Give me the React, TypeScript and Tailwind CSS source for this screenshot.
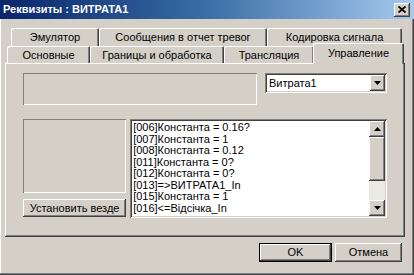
import React from 'react';

// Classic Win2000-style 3D edges
const raised =
  'shadow-[inset_-1px_-1px_0_#404040,inset_1px_1px_0_#ffffff,inset_-2px_-2px_0_#808080,inset_2px_2px_0_#d4d0c8]';
const sunken =
  'shadow-[inset_1px_1px_0_#808080,inset_-1px_-1px_0_#ffffff,inset_2px_2px_0_#404040,inset_-2px_-2px_0_#d4d0c8]';
const staticEdge = 'shadow-[inset_1px_1px_0_#808080,inset_-1px_-1px_0_#ffffff]';
const tabEdge =
  'shadow-[inset_1px_1px_0_#ffffff,inset_-1px_0_0_#404040,inset_-2px_0_0_#808080]';

const listItems = [
  '[006]Константа = 0.16?',
  '[007]Константа = 1',
  '[008]Константа = 0.12',
  '[011]Константа = 0?',
  '[012]Константа = 0?',
  '[013]=>ВИТРАТА1_In',
  '[015]Константа = 1',
  '[016]<=Відсічка_In',
];

const Arrow: React.FC<{ up?: boolean }> = ({ up }) => (
  <svg width="7" height="4" viewBox="0 0 7 4">
    {up ? <path d="M3.5 0 L7 4 L0 4 Z" fill="#000" /> : <path d="M0 0 L7 0 L3.5 4 Z" fill="#000" />}
  </svg>
);

const Tab: React.FC<{ label: string; width: string }> = ({ label, width }) => (
  <div className={`${width} h-full flex items-center justify-center rounded-t-[2px] ${tabEdge}`}>
    <span className="pt-[1px]">{label}</span>
  </div>
);

export default function App() {
  return (
    <div
      className="w-[414px] h-[275px] bg-[#d4d0c8] text-black text-[11px] leading-none flex flex-col overflow-hidden shadow-[inset_-1px_-1px_0_#404040,inset_-2px_-2px_0_#808080,inset_1px_1px_0_#ffffff]"
      style={{ fontFamily: '"Liberation Sans", Arial, sans-serif' }}
    >
      {/* Title bar */}
      <div className="h-[19px] flex items-center justify-between pl-[3px] pr-[4px] bg-gradient-to-r from-[#0a246a] via-[#3a6ea5] to-[#a6caf0]">
        <span className="text-white font-bold text-[11px]">Реквизиты : ВИТРАТА1</span>
        <div className={`w-[16px] h-[14px] bg-[#d4d0c8] flex items-center justify-center ${raised}`}>
          <svg width="8" height="7" viewBox="0 0 8 7">
            <path d="M0.5 0.5 L7.5 6.5 M7.5 0.5 L0.5 6.5" stroke="#000" strokeWidth="1.8" />
          </svg>
        </div>
      </div>

      {/* Tabs */}
      <div className="pl-[5px] pt-[9px]">
        <div className="ml-[6px] flex h-[18px]">
          <Tab label="Эмулятор" width="w-[88px]" />
          <Tab label="Сообщения в отчет тревог" width="w-[168px]" />
          <Tab label="Кодировка сигнала" width="w-[135px]" />
        </div>
        <div className="ml-[2px] flex h-[17px]">
          <Tab label="Основные" width="w-[83px]" />
          <Tab label="Границы и обработка" width="w-[134px]" />
          <Tab label="Трансляция" width="w-[90px]" />
          <div
            className={`relative z-10 w-[91px] h-[21px] -mt-[3px] -ml-[1px] bg-[#d4d0c8] flex items-start justify-center pt-[5px] rounded-t-[2px] ${tabEdge}`}
          >
            Управление
          </div>
        </div>

        {/* Panel */}
        <div className={`w-[400px] h-[174px] px-[18px] pt-[10px] flex flex-col gap-[14px] ${raised}`}>
          <div className="flex gap-[8px]">
            <div className={`w-[236px] h-[32px] ${staticEdge}`} />
            <div className={`w-[123px] h-[20px] bg-white flex items-center justify-between pl-[4px] pr-[2px] ${sunken}`}>
              <span>Витрата1</span>
              <div className={`w-[15px] h-[16px] bg-[#d4d0c8] flex items-center justify-center ${raised}`}>
                <Arrow />
              </div>
            </div>
          </div>

          <div className="flex gap-[4px]">
            <div className="w-[104px] flex flex-col gap-[6px]">
              <div className={`h-[74px] ${staticEdge}`} />
              <div className={`h-[18px] flex items-center justify-center ${raised}`}>Установить везде</div>
            </div>
            <div className={`w-[259px] h-[99px] bg-white flex p-[2px] ${sunken}`}>
              <div className="flex-1 overflow-hidden pl-[1px] pt-[1px]">
                {listItems.map((item) => (
                  <div key={item} className="h-[11.5px] leading-[11.5px] whitespace-nowrap">
                    {item}
                  </div>
                ))}
              </div>
              <div className="w-[16px] flex flex-col bg-[#ebe9e4]">
                <div className={`h-[16px] bg-[#d4d0c8] flex items-center justify-center ${raised}`}>
                  <Arrow up />
                </div>
                <div className={`h-[44px] bg-[#d4d0c8] ${raised}`} />
                <div className="flex-1" />
                <div className={`h-[16px] bg-[#d4d0c8] flex items-center justify-center ${raised}`}>
                  <Arrow />
                </div>
              </div>
            </div>
          </div>
        </div>
      </div>

      {/* Dialog buttons */}
      <div className="flex justify-end gap-[3px] pr-[12px] pt-[6px]">
        <div className="w-[73px] h-[19px] border border-black flex">
          <div className={`flex-1 flex items-center justify-center ${raised}`}>OK</div>
        </div>
        <div className={`w-[67px] h-[19px] flex items-center justify-center ${raised}`}>Отмена</div>
      </div>
    </div>
  );
}
